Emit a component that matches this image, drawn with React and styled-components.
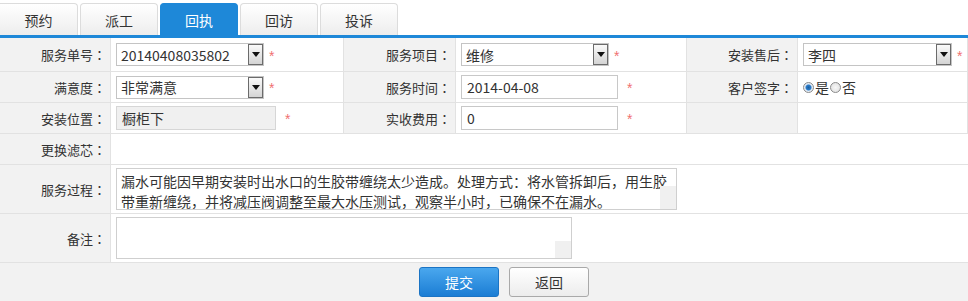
import React from "react";
import styled, { createGlobalStyle } from "styled-components";

const GlobalStyle = createGlobalStyle`
  body {
    margin: 0;
    background: #fff;
    font-family: "Noto Sans CJK SC", "Noto Sans", sans-serif;
    color: #333;
    text-spacing-trim: space-all;
  }
`;

const Page = styled.div`
  width: 968px;
  height: 301px;
  overflow: hidden;
  background: #fff;
`;

const TabBar = styled.div`
  display: flex;
  align-items: flex-end;
  gap: 2px;
  height: 38px;
  padding-top: 3px;
  box-sizing: border-box;
  border-bottom: 3px solid #1e88d8;
`;

const Tab = styled.div`
  width: 78px;
  height: 32px;
  box-sizing: border-box;
  display: flex;
  align-items: center;
  justify-content: center;
  font-size: 14px;
  border: 1px solid ${(p) => (p.$active ? "#1e88d8" : "#dcdcdc")};
  border-bottom: none;
  border-radius: 4px 4px 0 0;
  color: ${(p) => (p.$active ? "#fff" : "#333")};
  background: ${(p) =>
    p.$active ? "#1e88d8" : "linear-gradient(#ffffff, #ededed)"};
  &:first-child {
    border-left: none;
    border-top-left-radius: 0;
  }
`;

const FormGrid = styled.div`
  display: grid;
  grid-template-columns: 111px 233px 112px 231px 111px 1fr;
  grid-template-rows: 34px 31px 31px 31px 49px 49px;
`;

const Cell = styled.div`
  box-sizing: border-box;
  display: flex;
  align-items: center;
  border-bottom: 1px solid #e2e2e2;
  border-right: 1px solid #e2e2e2;
  &:last-child {
    border-right: none;
  }
`;

const Label = styled(Cell)`
  justify-content: flex-end;
  padding-right: 4px;
  background: #f2f2f2;
  font-family: "Noto Sans CJK TC", "Noto Sans CJK SC", sans-serif;
  font-size: 13px;
  color: #333;
`;

const Value = styled(Cell)`
  padding-left: 5px;
  background: #fff;
  grid-column: ${(p) => (p.$wide ? "2 / -1" : "auto")};
  border-right: ${(p) => (p.$wide ? "none" : "1px solid #e2e2e2")};
`;

const SelectBox = styled.div`
  width: ${(p) => p.$w || 148}px;
  height: 23px;
  box-sizing: border-box;
  border: 1px solid #c4c4c4;
  background: #fff;
  display: flex;
  align-items: center;
  justify-content: space-between;
  padding-left: 4px;
  font-size: 14px;
  color: #333;
`;

const ArrowBtn = styled.span`
  width: 15px;
  height: 21px;
  box-sizing: border-box;
  border: 1px solid #6b6b6b;
  background: linear-gradient(#fafafa, #d4d4d4);
  display: flex;
  align-items: center;
  justify-content: center;
`;

const TextInput = styled.div`
  width: ${(p) => p.$w || 157}px;
  height: 24px;
  box-sizing: border-box;
  border: 1px solid ${(p) => (p.$disabled ? "#d6d6d6" : "#c8c8c8")};
  background: ${(p) => (p.$disabled ? "#f0f0f0" : "#fff")};
  padding-left: 5px;
  display: flex;
  align-items: center;
  font-size: 14px;
  color: #333;
`;

const Star = styled.span`
  color: #f07070;
  font-family: "Liberation Sans", sans-serif;
  font-size: 14px;
  margin-left: ${(p) => p.$gap || 6}px;
  transform: translateY(1px);
`;

const RadioItem = styled.label`
  display: inline-flex;
  align-items: center;
  font-size: 14px;
  color: #333;
  margin-right: 1px;
`;

const RadioDot = styled.span`
  width: 11px;
  height: 11px;
  box-sizing: border-box;
  border-radius: 50%;
  border: 1px solid #8a8a8a;
  margin-right: 1px;
  background: ${(p) =>
    p.$checked
      ? "radial-gradient(circle, #1c5f9c 0, #2b7ccc 2.5px, #dfe9f3 3.5px, #f4f4f4 100%)"
      : "radial-gradient(circle, #f8f8f8 0, #dcdcdc 100%)"};
`;

const AreaWrap = styled.div`
  position: relative;
  width: ${(p) => p.$w}px;
  height: 42px;
`;

const TextArea = styled.textarea`
  display: block;
  width: 100%;
  height: 42px;
  box-sizing: border-box;
  border: 1px solid #cfcfcf;
  padding: 2px 4px;
  margin: 0;
  resize: none;
  overflow: hidden;
  font-family: "Noto Sans CJK SC", "Noto Sans", sans-serif;
  font-size: 14px;
  line-height: 20px;
  color: #333;
  outline: none;
  text-spacing-trim: space-all;
`;

const AreaCorner = styled.span`
  position: absolute;
  right: 1px;
  bottom: 1px;
  width: 16px;
  height: ${(p) => p.$h}px;
  background: #f0f0f0;
`;

const Footer = styled.div`
  height: 39px;
  background: #f2f2f2;
  display: flex;
  align-items: flex-start;
  gap: 10px;
  padding: 4px 0 0 419px;
  box-sizing: border-box;
`;

const Button = styled.button`
  width: 80px;
  height: 30px;
  box-sizing: border-box;
  border-radius: 3px;
  font-family: "Noto Sans CJK SC", "Noto Sans", sans-serif;
  font-size: 14px;
  cursor: pointer;
  border: 1px solid ${(p) => (p.$primary ? "#1b74c4" : "#a9a9a9")};
  color: ${(p) => (p.$primary ? "#fff" : "#333")};
  background: ${(p) =>
    p.$primary
      ? "linear-gradient(#4aa7ee, #1b7dd4)"
      : "linear-gradient(#ffffff, #ececec)"};
`;

function Select({ value, w }) {
  return (
    <SelectBox $w={w}>
      <span>{value}</span>
      <ArrowBtn>
        <svg width="8" height="5" viewBox="0 0 8 5">
          <path d="M0 0 H8 L4 5 Z" fill="#111" />
        </svg>
      </ArrowBtn>
    </SelectBox>
  );
}

const tabs = ["预约", "派工", "回执", "回访", "投诉"];

export default function App() {
  return (
    <Page>
      <GlobalStyle />
      <TabBar>
        {tabs.map((t) => (
          <Tab key={t} $active={t === "回执"}>
            {t}
          </Tab>
        ))}
      </TabBar>
      <FormGrid>
        <Label>服务单号：</Label>
        <Value>
          <Select value="20140408035802" />
          <Star $gap={5}>*</Star>
        </Value>
        <Label>服务项目：</Label>
        <Value>
          <Select value="维修" />
          <Star $gap={5}>*</Star>
        </Value>
        <Label>安装售后：</Label>
        <Value>
          <Select value="李四" w={149} />
          <Star $gap={5}>*</Star>
        </Value>

        <Label>满意度：</Label>
        <Value>
          <Select value="非常满意" />
          <Star $gap={5}>*</Star>
        </Value>
        <Label>服务时间：</Label>
        <Value>
          <TextInput>2014-04-08</TextInput>
          <Star $gap={9}>*</Star>
        </Value>
        <Label>客户签字：</Label>
        <Value>
          <RadioItem>
            <RadioDot $checked />是
          </RadioItem>
          <RadioItem>
            <RadioDot />否
          </RadioItem>
        </Value>

        <Label>安装位置：</Label>
        <Value>
          <TextInput $w={160} $disabled>
            橱柜下
          </TextInput>
          <Star $gap={9}>*</Star>
        </Value>
        <Label>实收费用：</Label>
        <Value>
          <TextInput>0</TextInput>
          <Star $gap={9}>*</Star>
        </Value>
        <Label />
        <Value />

        <Label>更换滤芯：</Label>
        <Value $wide />

        <Label>服务过程：</Label>
        <Value $wide>
          <AreaWrap $w={561}>
            <TextArea
              readOnly
              value="漏水可能因早期安装时出水口的生胶带缠绕太少造成。处理方式：将水管拆卸后，用生胶带重新缠绕，并将减压阀调整至最大水压测试，观察半小时，已确保不在漏水。"
            />
            <AreaCorner $h={23} />
          </AreaWrap>
        </Value>

        <Label>备注：</Label>
        <Value $wide>
          <AreaWrap $w={456}>
            <TextArea readOnly value="" />
            <AreaCorner $h={17} />
          </AreaWrap>
        </Value>
      </FormGrid>
      <Footer>
        <Button $primary>提交</Button>
        <Button>返回</Button>
      </Footer>
    </Page>
  );
}
